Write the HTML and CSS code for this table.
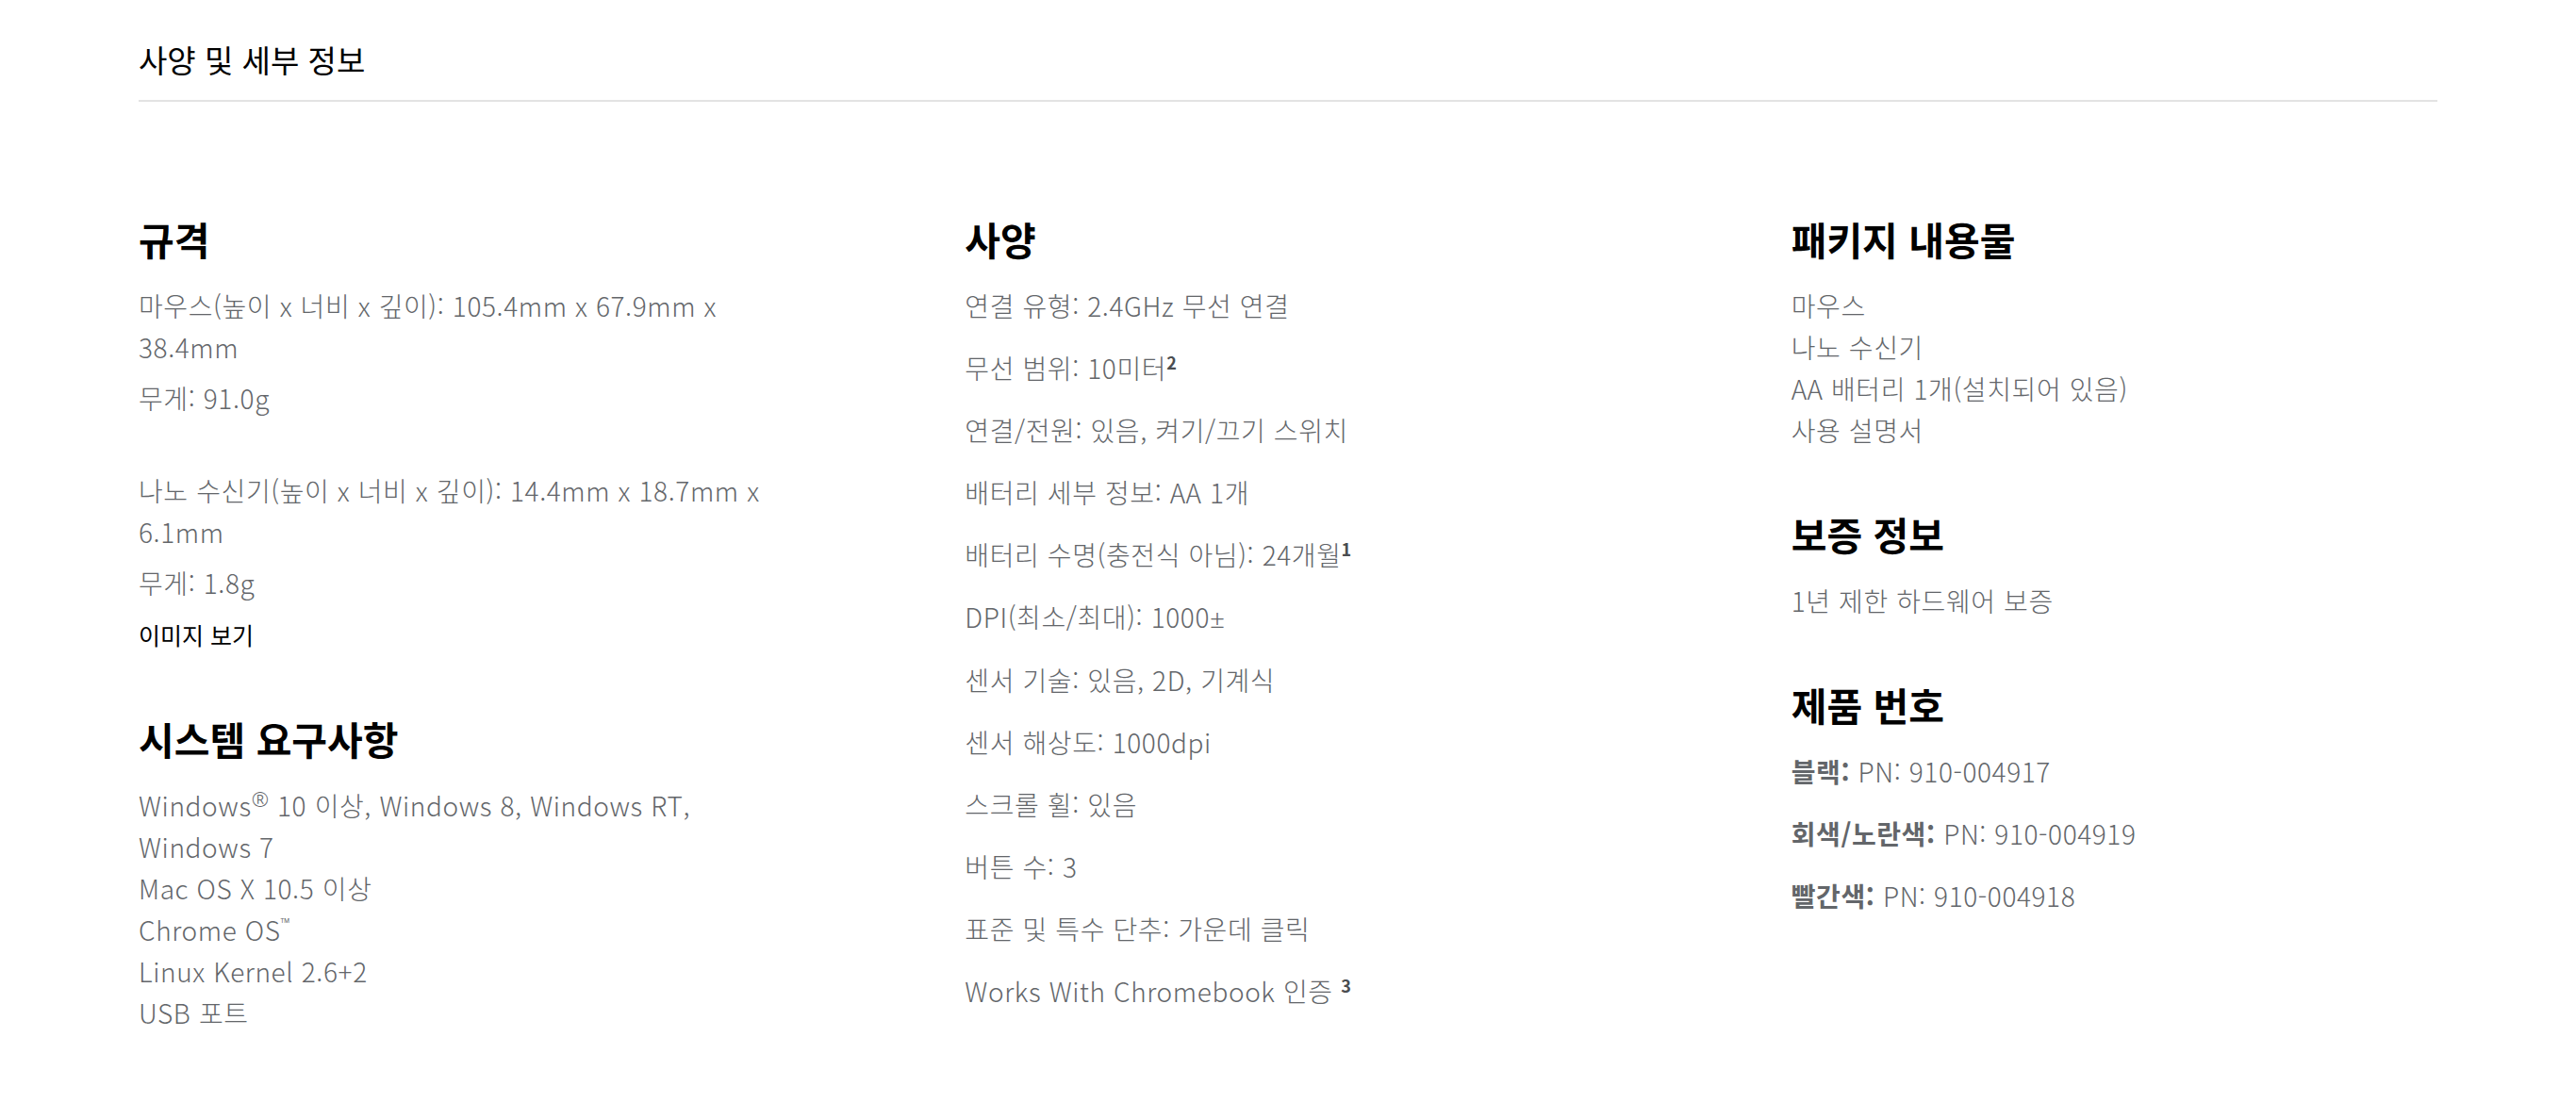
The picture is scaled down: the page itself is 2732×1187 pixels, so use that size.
FILE: index.html
```html
<!DOCTYPE html>
<html lang="ko">
<head>
<meta charset="utf-8">
<title>사양 및 세부 정보</title>
<link rel="stylesheet" href="styles.css">
</head>
<body>
<div class="page">
  <div class="specs-header">사양 및 세부 정보</div>
  <div class="specs-grid">
    <div class="col">
      <section class="block">
        <h3 class="block-title">규격</h3>
        <p class="text">마우스(높이 x 너비 x 깊이): 105.4mm x 67.9mm x 38.4mm</p>
        <p class="text">무게: 91.0g<br>&nbsp;</p>
        <p class="text">나노 수신기(높이 x 너비 x 깊이): 14.4mm x 18.7mm x 6.1mm</p>
        <p class="text">무게: 1.8g</p>
        <p class="text"><a class="link" href="#">이미지 보기</a></p>
      </section>
      <section class="block">
        <h3 class="block-title">시스템 요구사항</h3>
        <p class="text">Windows<sup class="mark">®</sup> 10 이상, Windows 8, Windows RT, Windows 7<br>Mac OS X 10.5 이상<br>Chrome OS<sup class="mark tm">™</sup><br>Linux Kernel 2.6+2<br>USB 포트</p>
      </section>
    </div>
    <div class="col">
      <section class="block">
        <h3 class="block-title">사양</h3>
        <ul class="items">
          <li>연결 유형: 2.4GHz 무선 연결</li>
          <li>무선 범위: 10미터<sup class="note">2</sup></li>
          <li>연결/전원: 있음, 켜기/끄기 스위치</li>
          <li>배터리 세부 정보: AA 1개</li>
          <li>배터리 수명(충전식 아님): 24개월<sup class="note">1</sup></li>
          <li>DPI(최소/최대): 1000<span class="latin">±</span></li>
          <li>센서 기술: 있음, 2D, 기계식</li>
          <li>센서 해상도: 1000dpi</li>
          <li>스크롤 휠: 있음</li>
          <li>버튼 수: 3</li>
          <li>표준 및 특수 단추: 가운데 클릭</li>
          <li>Works With Chromebook 인증 <sup class="note">3</sup></li>
        </ul>
      </section>
    </div>
    <div class="col">
      <section class="block">
        <h3 class="block-title">패키지 내용물</h3>
        <p class="text">마우스<br>나노 수신기<br>AA 배터리 1개(설치되어 있음)<br>사용 설명서</p>
      </section>
      <section class="block">
        <h3 class="block-title">보증 정보</h3>
        <p class="text">1년 제한 하드웨어 보증</p>
      </section>
      <section class="block">
        <h3 class="block-title">제품 번호</h3>
        <ul class="items">
          <li><b class="label">블랙:</b> PN: 910-004917</li>
          <li><b class="label">회색/노란색:</b> PN: 910-004919</li>
          <li><b class="label">빨간색:</b> PN: 910-004918</li>
        </ul>
      </section>
    </div>
  </div>
</div>
</body>
</html>
```

FILE: styles.css
```css
html, body {
  margin: 0;
  padding: 0;
  background: #ffffff;
}

body {
  font-family: "Noto Sans CJK KR", "Noto Sans", sans-serif;
  color: #63666a;
}

.page {
  width: 2438px;
  margin: 0 auto;
}

.specs-header {
  padding-top: 41px;
  padding-bottom: 21px;
  font-size: 33px;
  line-height: 44px;
  font-weight: 400;
  color: #000000;
  border-bottom: 2px solid #e3e3e3;
}

.specs-grid {
  display: grid;
  grid-template-columns: repeat(3, 1fr);
  column-gap: 191px;
  padding-top: 119px;
}

.col {
  display: flex;
  flex-direction: column;
  gap: 62px;
}

.block-title {
  margin: 0 0 23px;
  font-size: 41px;
  line-height: 52px;
  font-weight: 700;
  color: #000000;
}

.text {
  margin: 0 0 10px;
  max-width: 680px;
  font-size: 28px;
  line-height: 44px;
  font-weight: 300;
  letter-spacing: 0.6px;
}

.text:last-child {
  margin-bottom: 0;
}

.link {
  color: #000000;
  text-decoration: none;
  font-size: 25px;
  font-weight: 400;
  letter-spacing: 0;
}

.items {
  list-style: none;
  margin: 0;
  padding: 0;
  display: flex;
  flex-direction: column;
  gap: 22px;
}

.items li {
  font-size: 28px;
  line-height: 44px;
  font-weight: 300;
  letter-spacing: 0.6px;
}

.latin {
  font-family: "Noto Sans", sans-serif;
}

.note {
  font-size: 18px;
  font-weight: 700;
  line-height: 0;
  vertical-align: 10px;
  color: #4a4d50;
}

.mark {
  font-family: "Noto Sans", sans-serif;
  font-size: 22px;
  line-height: 0;
  vertical-align: 10px;
}

.mark.tm {
  font-size: 14px;
  vertical-align: 14px;
}

.label {
  font-weight: 700;
}
```
